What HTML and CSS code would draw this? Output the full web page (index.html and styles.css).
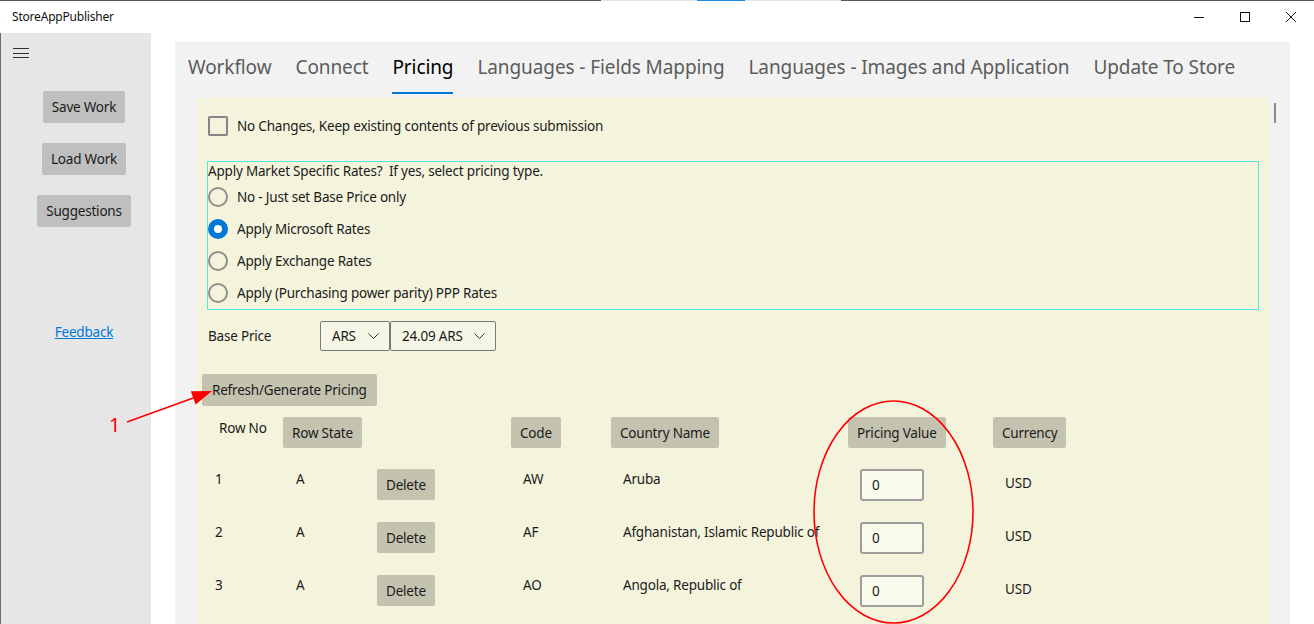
FILE: index.html
```html
<!DOCTYPE html>
<html lang="en">
<head>
<meta charset="utf-8">
<title>StoreAppPublisher</title>
<link rel="stylesheet" href="styles.css">
</head>
<body>
<div class="window">
  <div class="topline"><span class="tl-dark"></span><span class="tl-light"></span><span class="tl-blue"></span><span class="tl-light"></span><span class="tl-rest"></span></div>
  <header class="titlebar">
    <span class="app-title">StoreAppPublisher</span>
    <div class="controls">
      <span class="ctl"><svg width="10" height="10" viewBox="0 0 10 10"><path d="M0 5.5H10" stroke="#111" stroke-width="1"/></svg></span>
      <span class="ctl"><svg width="10" height="10" viewBox="0 0 10 10"><rect x="0.5" y="0.5" width="9" height="9" fill="none" stroke="#111" stroke-width="1"/></svg></span>
      <span class="ctl"><svg width="10" height="10" viewBox="0 0 10 10"><path d="M0 0L10 10M10 0L0 10" stroke="#111" stroke-width="1"/></svg></span>
    </div>
  </header>
  <div class="appbody">
    <aside class="sidebar">
      <div class="hamburger"><span></span><span></span><span></span></div>
      <div class="side-actions">
        <span class="side-btn">Save Work</span>
        <span class="side-btn">Load Work</span>
        <span class="side-btn">Suggestions</span>
        <a class="feedback">Feedback</a>
      </div>
    </aside>
    <main class="main">
      <nav class="tabs">
        <span class="tab">Workflow</span>
        <span class="tab">Connect</span>
        <span class="tab active">Pricing</span>
        <span class="tab">Languages - Fields Mapping</span>
        <span class="tab">Languages - Images and Application</span>
        <span class="tab">Update To Store</span>
      </nav>
      <div class="content-row">
        <section class="panel">
          <div class="check-row"><span class="checkbox"></span><span>No Changes, Keep existing contents of previous submission</span></div>
          <div class="rates">
            <div class="rates-label">Apply Market Specific Rates?&nbsp; If yes, select pricing type.</div>
            <div class="radio-row"><span class="radio"></span><span>No - Just set Base Price only</span></div>
            <div class="radio-row"><span class="radio checked"></span><span>Apply Microsoft Rates</span></div>
            <div class="radio-row"><span class="radio"></span><span>Apply Exchange Rates</span></div>
            <div class="radio-row"><span class="radio"></span><span>Apply (Purchasing power parity) PPP Rates</span></div>
          </div>
          <div class="base-row">
            <span class="base-label">Base Price</span>
            <span class="select sel-cur"><span>ARS</span><svg width="11" height="6" viewBox="0 0 11 6"><path d="M0.5 0.5L5.5 5.5L10.5 0.5" fill="none" stroke="#333" stroke-width="1"/></svg></span>
            <span class="select sel-price"><span>24.09 ARS</span><svg width="11" height="6" viewBox="0 0 11 6"><path d="M0.5 0.5L5.5 5.5L10.5 0.5" fill="none" stroke="#333" stroke-width="1"/></svg></span>
          </div>
          <div class="refresh-wrap"><span class="pbtn refresh">Refresh/Generate Pricing</span></div>
          <div class="grid head">
            <div class="c1"><span class="rowno">Row No</span></div>
            <div class="c2"><span class="pbtn hbtn">Row State</span></div>
            <div class="c3"></div>
            <div class="c4"><span class="pbtn hbtn">Code</span></div>
            <div class="c5"><span class="pbtn hbtn">Country Name</span></div>
            <div class="c6"><span class="pbtn hbtn">Pricing Value</span></div>
            <div class="c7"><span class="pbtn hbtn">Currency</span></div>
          </div>
          <div class="rows">
            <div class="grid row">
              <div class="c1 txt">1</div><div class="c2 txt">A</div><div class="c3"><span class="pbtn dbtn">Delete</span></div>
              <div class="c4 txt">AW</div><div class="c5 txt">Aruba</div><div class="c6"><span class="input">0</span></div><div class="c7 txt cur">USD</div>
            </div>
            <div class="grid row">
              <div class="c1 txt">2</div><div class="c2 txt">A</div><div class="c3"><span class="pbtn dbtn">Delete</span></div>
              <div class="c4 txt">AF</div><div class="c5 txt">Afghanistan, Islamic Republic of</div><div class="c6"><span class="input">0</span></div><div class="c7 txt cur">USD</div>
            </div>
            <div class="grid row">
              <div class="c1 txt">3</div><div class="c2 txt">A</div><div class="c3"><span class="pbtn dbtn">Delete</span></div>
              <div class="c4 txt">AO</div><div class="c5 txt">Angola, Republic of</div><div class="c6"><span class="input">0</span></div><div class="c7 txt cur">USD</div>
            </div>
          </div>
        </section>
        <div class="scroll"><div class="thumb"></div></div>
      </div>
    </main>
  </div>
  <svg class="annot" width="1314" height="624" viewBox="0 0 1314 624">
    <line x1="127" y1="422" x2="196" y2="397" stroke="#f00" stroke-width="1.6"/>
    <polygon points="212,391 190.8,391.2 195.6,404.4" fill="#f00"/>
    <ellipse cx="893.5" cy="512" rx="79.5" ry="111" fill="none" stroke="#f00" stroke-width="1.6"/>
  </svg>
  <span class="annot-num">1</span>
</div>
</body>
</html>
```

FILE: styles.css
```css
* { box-sizing: border-box; }
html, body { margin: 0; padding: 0; }
body {
  width: 1314px;
  height: 624px;
  overflow: hidden;
  background: #fff;
  font-family: "Segoe UI", "Noto Sans", "Open Sans", sans-serif;
  font-size: 13.5px;
  letter-spacing: -0.2px;
  color: #1b1b1b;
}
.window { position: relative; width: 1314px; height: 624px; }

.topline { display: flex; height: 1px; }
.tl-dark { width: 601px; background: #555; }
.tl-light { width: 96px; background: #e4e4e4; }
.tl-blue { width: 48px; background: #1e88e5; }
.tl-rest { flex: 1; background: #555; }

.titlebar { height: 32px; display: flex; align-items: center; justify-content: space-between; }
.app-title { font-size: 12px; padding-left: 12px; line-height: 32px; color: #111; }
.controls { display: flex; height: 32px; }
.ctl { width: 46px; height: 32px; display: flex; align-items: center; justify-content: center; }

.appbody { display: flex; height: 591px; }

.sidebar {
  width: 151px;
  background: #e6e6e6;
  border-left: 1px solid #6b6b6b;
  display: flex;
  flex-direction: column;
}
.hamburger {
  margin: 15px 0 0 12px;
  width: 16px;
  height: 10px;
  display: flex;
  flex-direction: column;
  justify-content: space-between;
}
.hamburger span { height: 1px; background: #333; }
.side-actions {
  display: flex;
  flex-direction: column;
  align-items: center;
  padding-left: 16px;
  margin-top: 33px;
  gap: 20px;
}
.side-btn {
  height: 32px;
  line-height: 32px;
  padding: 0 9px;
  background: #bfbfbf;
  border-radius: 2px;
  white-space: nowrap;
}
.feedback {
  margin-top: 75px;
  line-height: 20px;
  color: #0078d7;
  text-decoration: underline;
}

.main {
  margin: 9px 0 0 24px;
  width: 1115px;
  background: #f2f2f2;
  display: flex;
  flex-direction: column;
}
.tabs { display: flex; gap: 24px; padding: 11px 0 0 13px; }
.tab {
  font-size: 19px;
  letter-spacing: -0.1px;
  line-height: 28px;
  padding-bottom: 11px;
  border-bottom: 2px solid transparent;
  color: #5c5c5c;
  white-space: nowrap;
}
.tab.active { color: #000; border-bottom-color: #0078d7; }

.content-row { display: flex; flex: 1; margin-top: 4px; }
.panel {
  margin-left: 22px;
  width: 1072px;
  background: #f4f4dd;
  display: flex;
  flex-direction: column;
}
.scroll { padding: 5px 0 0 5px; }
.thumb { width: 2px; height: 20px; background: #8a8a8a; }

.check-row { display: flex; align-items: center; gap: 9px; margin: 18px 0 0 11px; height: 20px; }
.checkbox { width: 20px; height: 20px; border: 2px solid #858585; border-radius: 2px; }

.rates { margin: 25px 10px 0 10px; border: 1px solid #4ee9e0; }
.rates-label { line-height: 19px; }
.radio-row { display: flex; align-items: center; gap: 9px; height: 32px; }
.radio { width: 20px; height: 20px; border-radius: 50%; border: 2px solid #8e8e8e; }
.radio.checked { border: 6px solid #0078d7; background: #fff; }

.base-row { display: flex; align-items: center; height: 30px; margin: 11px 0 0 11px; }
.base-label { width: 112px; }
.select {
  height: 30px;
  display: flex;
  align-items: center;
  justify-content: space-between;
  padding: 0 10px 0 11px;
  border: 1px solid #7a7a7a;
  border-radius: 2px;
  background: #f6f6e6;
}
.sel-cur { width: 70px; }
.sel-price { width: 106px; }

.pbtn {
  display: inline-flex;
  align-items: center;
  justify-content: center;
  background: #c4c3b0;
  border-radius: 2px;
  white-space: nowrap;
}
.refresh-wrap { margin: 23px 0 0 5px; display: flex; }
.refresh { height: 32px; padding: 0 10px; }

.grid {
  display: grid;
  grid-template-columns: 86px 94px 134px 100px 237px 145px 1fr;
}
.head { margin-top: 11px; height: 31px; }
.hbtn { height: 31px; padding: 0 9px; }
.rowno { display: block; padding: 1px 0 0 22px; line-height: 20px; }

.rows { margin-top: 21px; }
.row { height: 53px; }
.txt { line-height: 20px; padding-left: 12px; white-space: nowrap; }
.row .c1 { padding-left: 18px; }
.row .c2 { padding-left: 13px; }
.cur { padding-top: 4px; }
.dbtn { height: 31px; padding: 0 9px; }
.row .c6 { padding-left: 12px; }
.input {
  display: flex;
  align-items: center;
  width: 64px;
  height: 32px;
  padding-left: 10px;
  border: 2px solid #9d9d9d;
  border-radius: 3px;
  background: #fafaec;
}

.annot { position: absolute; left: 0; top: 0; pointer-events: none; }
.annot-num {
  position: absolute;
  left: 109px;
  top: 413px;
  font-size: 20px;
  line-height: 24px;
  color: #f00;
}
```
